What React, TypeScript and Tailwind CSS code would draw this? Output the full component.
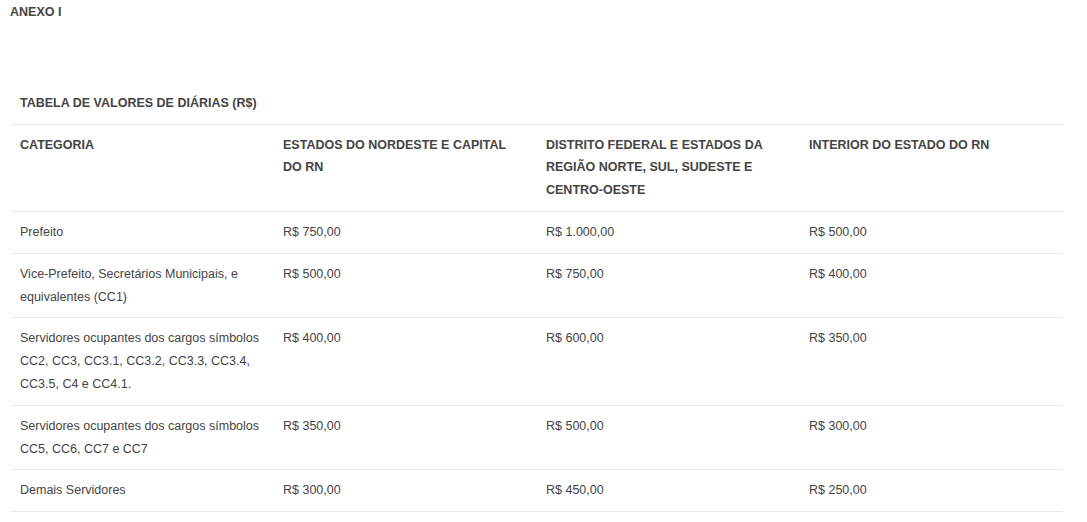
import React from 'react';

const headers = [
  'CATEGORIA',
  'ESTADOS DO NORDESTE E CAPITAL DO RN',
  'DISTRITO FEDERAL E ESTADOS DA REGIÃO NORTE, SUL, SUDESTE E CENTRO-OESTE',
  'INTERIOR DO ESTADO DO RN',
];

const rows = [
  ['Prefeito', 'R$ 750,00', 'R$ 1.000,00', 'R$ 500,00'],
  ['Vice-Prefeito, Secretários Municipais, e equivalentes (CC1)', 'R$ 500,00', 'R$ 750,00', 'R$ 400,00'],
  [
    'Servidores ocupantes dos cargos símbolos CC2, CC3, CC3.1, CC3.2, CC3.3, CC3.4, CC3.5, C4 e CC4.1.',
    'R$ 400,00',
    'R$ 600,00',
    'R$ 350,00',
  ],
  ['Servidores ocupantes dos cargos símbolos CC5, CC6, CC7 e CC7', 'R$ 350,00', 'R$ 500,00', 'R$ 300,00'],
  ['Demais Servidores', 'R$ 300,00', 'R$ 450,00', 'R$ 250,00'],
];

const App = () => {
  return (
    <div className="min-h-[522px] bg-white font-['Liberation_Sans',Arial,sans-serif] text-[12.5px] leading-[22.8px] text-[#444]">
      <p className="pl-[10px] pt-px font-bold">ANEXO I</p>

      <table className="mt-[59px] ml-[11px] w-[1052px] table-fixed border-collapse">
        <caption className="p-[9px] text-left font-bold">TABELA DE VALORES DE DIÁRIAS (R$)</caption>
        <thead>
          <tr className="border-y border-[#e8e8e8]">
            {headers.map((h) => (
              <th key={h} className="p-[9px] pr-[24px] text-left align-top font-bold">
                {h}
              </th>
            ))}
          </tr>
        </thead>
        <tbody>
          {rows.map((row) => (
            <tr key={row[0]} className="border-y border-[#e8e8e8]">
              {row.map((cell, i) => (
                <td key={i} className="p-[9px] pr-[10px] align-top">
                  {cell}
                </td>
              ))}
            </tr>
          ))}
        </tbody>
      </table>
    </div>
  );
};

export default App;
